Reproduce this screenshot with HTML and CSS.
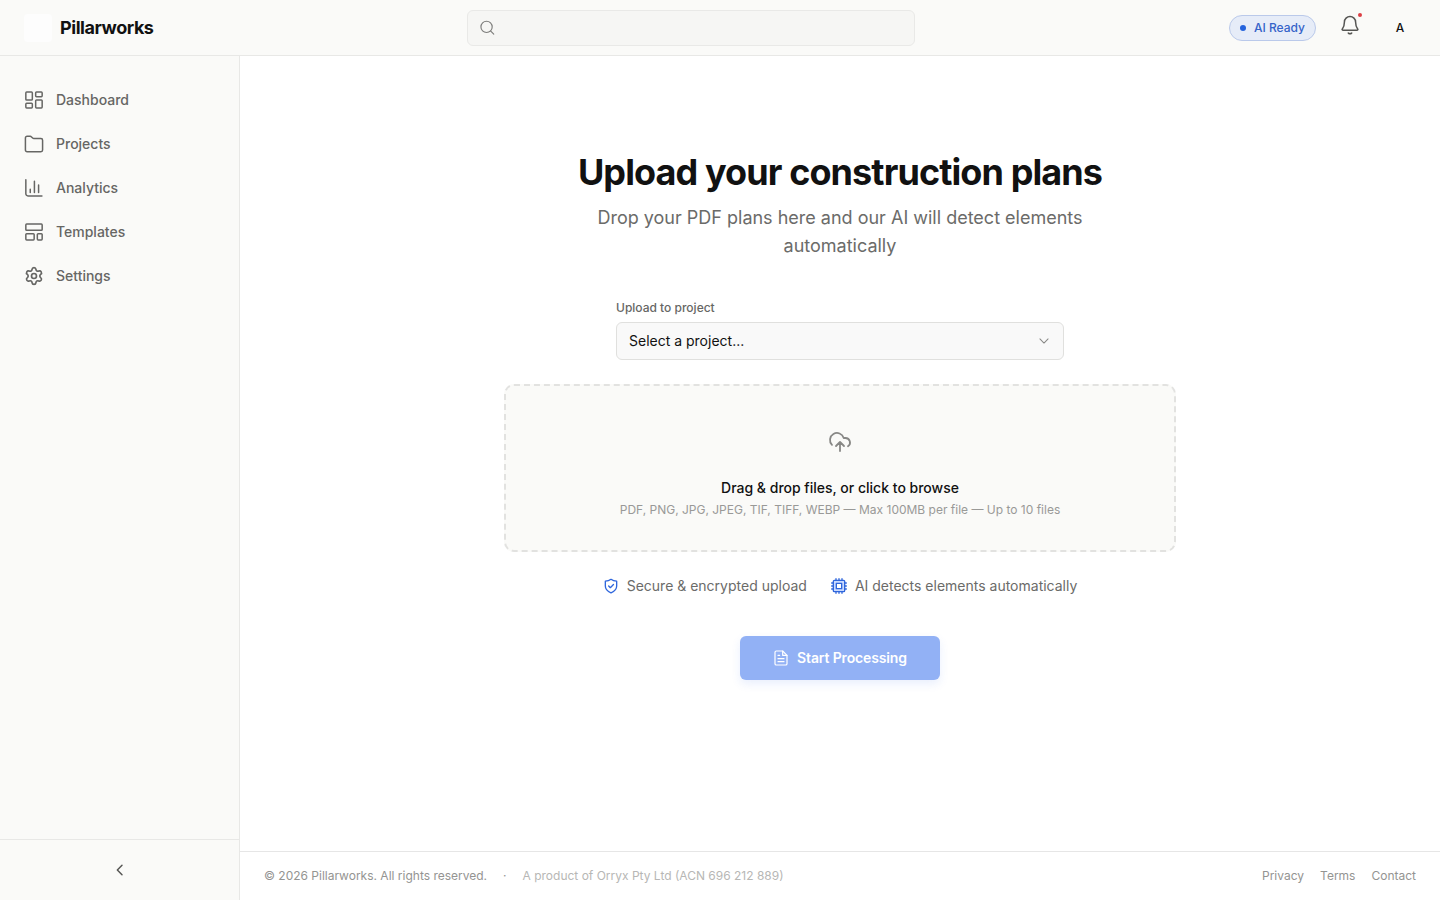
FILE: index.html
```html
<!DOCTYPE html>
<html lang="en">
<head>
  <meta charset="UTF-8" />
  <title>Pillarworks</title>
  <link rel="stylesheet" href="styles.css">
</head>
<body>

  <header class="topbar">
    <a class="brand">
      <span class="brand-logo"></span>
      <span class="brand-name">Pillarworks</span>
    </a>

    <div class="search">
      <svg class="icon" viewBox="0 0 24 24" aria-hidden="true"><circle cx="10.500" cy="11" r="9"/><path d="M17.200 17.700 22 22.500"/></svg>
      <input type="text" aria-label="Search">
    </div>

    <div class="topbar-actions">
      <span class="status"><span class="status-dot"></span>AI Ready</span>
      <button class="bell" aria-label="Notifications">
        <svg class="icon" viewBox="0 0 24 24" aria-hidden="true">
          <path d="M12 1.800a6.700 6.700 0 0 0-6.700 6.700c0 4.200-1 6.300-2.500 8.200-.6.8-.2 1.500.6 1.500h17.200c.8 0 1.200-.7.6-1.500-1.500-1.900-2.500-4-2.500-8.200A6.700 6.700 0 0 0 12 1.800Z"/>
          <path d="M10 21.700c1.100.9 2.900.9 4 0"/>
        </svg>
        <span class="bell-dot"></span>
      </button>
      <span class="avatar">A</span>
    </div>
  </header>

  <div class="layout">
    <aside class="sidebar">
      <nav class="nav">
        <a class="nav-item">
          <svg class="icon" viewBox="0 0 24 24" aria-hidden="true"><rect x="2.200" y="2.500" width="7.800" height="9.500" rx="1"/><rect x="14" y="2.500" width="7.800" height="5.500" rx="1"/><rect x="14" y="12" width="7.800" height="9.500" rx="1"/><rect x="2.200" y="16" width="7.800" height="5.500" rx="1"/></svg>
          Dashboard
        </a>
        <a class="nav-item">
          <svg class="icon" viewBox="0 0 24 24" aria-hidden="true"><path d="M1.700 4.800a2 2 0 0 1 2-2h3.800c.6 0 1.100.3 1.500.7l1.400 1.400c.4.4.9.6 1.400.6h8.500a2 2 0 0 1 2 2v11.700a2 2 0 0 1-2 2H3.700a2 2 0 0 1-2-2Z"/></svg>
          Projects
        </a>
        <a class="nav-item">
          <svg class="icon" viewBox="0 0 24 24" aria-hidden="true"><path d="M2.200 2v17A2.500 2.500 0 0 0 4.700 21.500H21.500M7.500 13.500v4M12.500 4v13.500M17.500 8.500v9"/></svg>
          Analytics
        </a>
        <a class="nav-item">
          <svg class="icon" viewBox="0 0 24 24" aria-hidden="true"><rect x="2.200" y="2.500" width="19.600" height="7.500" rx="1"/><rect x="2.200" y="14" width="10" height="7.500" rx="1"/><rect x="16" y="14" width="5.800" height="7.500" rx="1"/></svg>
          Templates
        </a>
        <a class="nav-item">
          <svg class="icon gear" viewBox="0 0 24 24" aria-hidden="true">
            <path d="M9.671 4.136a2.340 2.340 0 0 1 4.659 0 2.340 2.340 0 0 0 3.319 1.915 2.340 2.340 0 0 1 2.330 4.033 2.340 2.340 0 0 0 0 3.831 2.340 2.340 0 0 1-2.330 4.033 2.340 2.340 0 0 0-3.319 1.915 2.340 2.340 0 0 1-4.659 0 2.340 2.340 0 0 0-3.320-1.915 2.340 2.340 0 0 1-2.330-4.033 2.340 2.340 0 0 0 0-3.831A2.340 2.340 0 0 1 6.350 6.051a2.340 2.340 0 0 0 3.319-1.915"/>
            <circle cx="12" cy="12" r="3"/>
          </svg>
          Settings
        </a>
      </nav>
      <button class="collapse" aria-label="Collapse sidebar">
        <svg class="icon" viewBox="0 0 24 24" aria-hidden="true"><path d="m15 19-7-7 7-7"/></svg>
      </button>
    </aside>

    <div class="content">
      <main class="upload">
        <h1>Upload your construction plans</h1>
        <p class="lead">Drop your PDF plans here and our AI will detect elements automatically</p>

        <div class="field">
          <span class="field-label">Upload to project</span>
          <button class="select">
            Select a project...
            <svg class="icon" viewBox="0 0 24 24" aria-hidden="true"><path d="m5 8.500 7 7 7-7"/></svg>
          </button>
        </div>

        <div class="dropzone">
          <svg class="icon" viewBox="0 0 24 24" aria-hidden="true"><path d="M4 14.899A7 7 0 1 1 15.710 8h1.790a4.500 4.500 0 0 1 2.500 8.242"/><path d="M12 12v9M8 16l4-4 4 4"/></svg>
          <strong>Drag &amp; drop files, or click to browse</strong>
          <small>PDF, PNG, JPG, JPEG, TIF, TIFF, WEBP — Max 100MB per file — Up to 10 files</small>
        </div>

        <div class="features">
          <span class="feature">
            <svg class="icon" viewBox="0 0 24 24" aria-hidden="true"><path d="M12 2c2.500 1.800 5.500 2.600 8.500 2.800V12c0 5-3.500 8.200-8.500 10.200C7 20.200 3.500 17 3.500 12V4.800C6.500 4.600 9.500 3.800 12 2Z"/><path d="m8.500 12 2.500 2.500 4.700-4.700"/></svg>
            Secure &amp; encrypted upload
          </span>
          <span class="feature">
            <svg class="icon chip" viewBox="0 0 24 24" aria-hidden="true"><rect x="3.500" y="3.500" width="17" height="17" rx="1.500"/><rect class="core" x="8" y="8" width="8" height="8"/><path d="M7.500 1v2M12 1v2M16.500 1v2M7.500 21v2M12 21v2M16.500 21v2M1 7.500h2M1 12h2M1 16.500h2M21 7.500h2M21 12h2M21 16.500h2"/></svg>
            AI detects elements automatically
          </span>
        </div>

        <button class="start" disabled>
          <svg class="icon" viewBox="0 0 24 24" aria-hidden="true"><path d="M14.500 1.500H5a2 2 0 0 0-2 2v17a2 2 0 0 0 2 2h14a2 2 0 0 0 2-2V8Z"/><path d="M14.500 1.500V8H21M7.500 8h2.500M7.500 13h9M7.500 17.500h9"/></svg>
          Start Processing
        </button>
      </main>

      <footer class="footer">
        <span>© 2026 Pillarworks. All rights reserved.</span>
        <span class="sep">·</span>
        <span class="company">A product of Orryx Pty Ltd (ACN 696 212 889)</span>
        <div class="footer-links">
          <a>Privacy</a>
          <a>Terms</a>
          <a>Contact</a>
        </div>
      </footer>
    </div>
  </div>

</body>
</html>
```
FILE: styles.css
```css
* {
  box-sizing: border-box;
}

body {
  margin: 0;
  height: 100vh;
  display: flex;
  flex-direction: column;
  overflow: hidden;
  font-family: Inter, "Liberation Sans", sans-serif;
  font-size: 14px;
  line-height: 20px;
  color: #111;
  background: #fff;
}

button {
  font: inherit;
  color: inherit;
  background: none;
  border: none;
  padding: 0;
}

.icon {
  width: 20px;
  height: 20px;
  flex: none;
  fill: none;
  stroke: currentColor;
  stroke-width: 1.8;
  stroke-linecap: round;
  stroke-linejoin: round;
}

/* Top bar */
.topbar {
  height: 56px;
  flex: none;
  display: grid;
  grid-template-columns: 1fr 448px 1fr;
  align-items: center;
  padding: 0 24px;
  background: #fafaf8;
  border-bottom: 1px solid #e8e8e6;
}

.brand {
  display: flex;
  align-items: center;
  gap: 8px;
}

.brand-logo {
  width: 28px;
  height: 28px;
  border-radius: 4px;
  background: #fdfdfd;
}

.brand-name {
  font-size: 18px;
  font-weight: 700;
  letter-spacing: -0.45px;
}

.search {
  display: flex;
  align-items: center;
  width: 448px;
  height: 36px;
  margin-left: -29px;
  padding: 0 12px;
  border: 1px solid #e9e9e7;
  border-radius: 6px;
  background: #f6f6f4;
  color: #7c7c7a;
}

.search .icon {
  width: 15px;
  height: 15px;
}

.search input {
  flex: 1;
  border: none;
  outline: none;
  background: none;
}

.topbar-actions {
  display: flex;
  align-items: center;
  justify-content: flex-end;
}

.status {
  display: flex;
  align-items: center;
  gap: 8px;
  height: 26px;
  padding: 0 10px;
  border: 1px solid #bac9ea;
  border-radius: 13px;
  background: #e6ecf8;
  color: #3563c9;
  font-size: 12px;
  font-weight: 500;
}

.status-dot {
  width: 6px;
  height: 6px;
  border-radius: 50%;
  background: #2563dc;
}

.bell {
  position: relative;
  height: 20px;
  margin: -6px 24px 0;
  color: #555553;
}

.bell .icon {
  display: block;
}

.bell-dot {
  position: absolute;
  top: -2px;
  right: -2px;
  width: 4px;
  height: 4px;
  border-radius: 50%;
  background: #dc3f45;
}

.avatar {
  width: 32px;
  text-align: center;
  font-size: 12px;
  font-weight: 500;
}

/* Sidebar */
.layout {
  flex: 1;
  min-height: 0;
  display: flex;
}

.sidebar {
  width: 240px;
  flex: none;
  display: flex;
  flex-direction: column;
  background: #fafaf8;
  border-right: 1px solid #e8e8e6;
}

.nav {
  flex: 1;
  display: flex;
  flex-direction: column;
  gap: 4px;
  padding: 24px 12px;
}

.nav-item {
  display: flex;
  align-items: center;
  gap: 12px;
  height: 40px;
  padding: 0 12px;
  color: #666664;
  font-weight: 500;
}

.nav-item .gear {
  stroke-width: 2;
}

.collapse {
  display: flex;
  align-items: center;
  justify-content: center;
  height: 61px;
  border-top: 1px solid #e8e8e6;
  color: #555553;
}

.collapse .icon {
  width: 16px;
  height: 16px;
  stroke-width: 2.2;
}

/* Upload page */
.content {
  flex: 1;
  display: flex;
  flex-direction: column;
}

.upload {
  flex: 1;
  display: flex;
  flex-direction: column;
  align-items: center;
  padding-top: 94px;
}

h1 {
  margin: 0;
  font-size: 36px;
  font-weight: 700;
  line-height: 45px;
  letter-spacing: -0.9px;
}

.lead {
  width: 512px;
  margin: 9px 0 0;
  font-size: 18px;
  line-height: 28px;
  text-align: center;
  color: #6b6b69;
}

.field {
  width: 448px;
  margin-top: 40px;
}

.field-label {
  display: block;
  font-size: 12px;
  font-weight: 500;
  line-height: 16px;
  color: #666664;
}

.select {
  display: flex;
  align-items: center;
  justify-content: space-between;
  width: 100%;
  height: 38px;
  margin-top: 6px;
  padding: 0 12px;
  border: 1px solid #e0e0de;
  border-radius: 6px;
  background: #f9f9f9;
}

.select .icon {
  width: 14px;
  height: 14px;
  color: #888886;
}

.dropzone {
  display: flex;
  flex-direction: column;
  align-items: center;
  width: 672px;
  height: 168px;
  margin-top: 24px;
  padding-top: 44px;
  border: 2px dashed #e2e2e0;
  border-radius: 10px;
  background: #fafaf8;
}

.dropzone .icon {
  width: 24px;
  height: 24px;
  color: #888886;
}

.dropzone strong {
  margin-top: 24px;
  font-weight: 500;
  line-height: 20px;
}

.dropzone small {
  margin-top: 4px;
  font-size: 12px;
  line-height: 16px;
  color: #999997;
}

.features {
  display: flex;
  gap: 24px;
  margin-top: 24px;
}

.feature {
  display: flex;
  align-items: center;
  gap: 8px;
  color: #6b6b69;
}

.feature .icon {
  width: 16px;
  height: 16px;
  color: #2f66dc;
  stroke-width: 2;
}

.feature .chip {
  fill: #c9daff;
}

.feature .core {
  fill: #fff;
}

.start {
  display: flex;
  align-items: center;
  justify-content: center;
  gap: 8px;
  width: 200px;
  height: 44px;
  margin-top: 40px;
  border-radius: 6px;
  background: #92b1f5;
  color: #fff;
  font-weight: 600;
  letter-spacing: -0.14px;
  box-shadow: 0 4px 10px rgba(37, 99, 235, 0.1);
}

.start .icon {
  width: 16px;
  height: 16px;
}

/* Footer */
.footer {
  display: flex;
  align-items: center;
  height: 49px;
  padding: 0 24px;
  border-top: 1px solid #e6e6e6;
  font-size: 12px;
  line-height: 16px;
  color: #949492;
}

.sep {
  margin: 0 16px;
}

.company {
  color: #b7b7b5;
}

.footer-links {
  display: flex;
  gap: 16px;
  margin-left: auto;
}
```
